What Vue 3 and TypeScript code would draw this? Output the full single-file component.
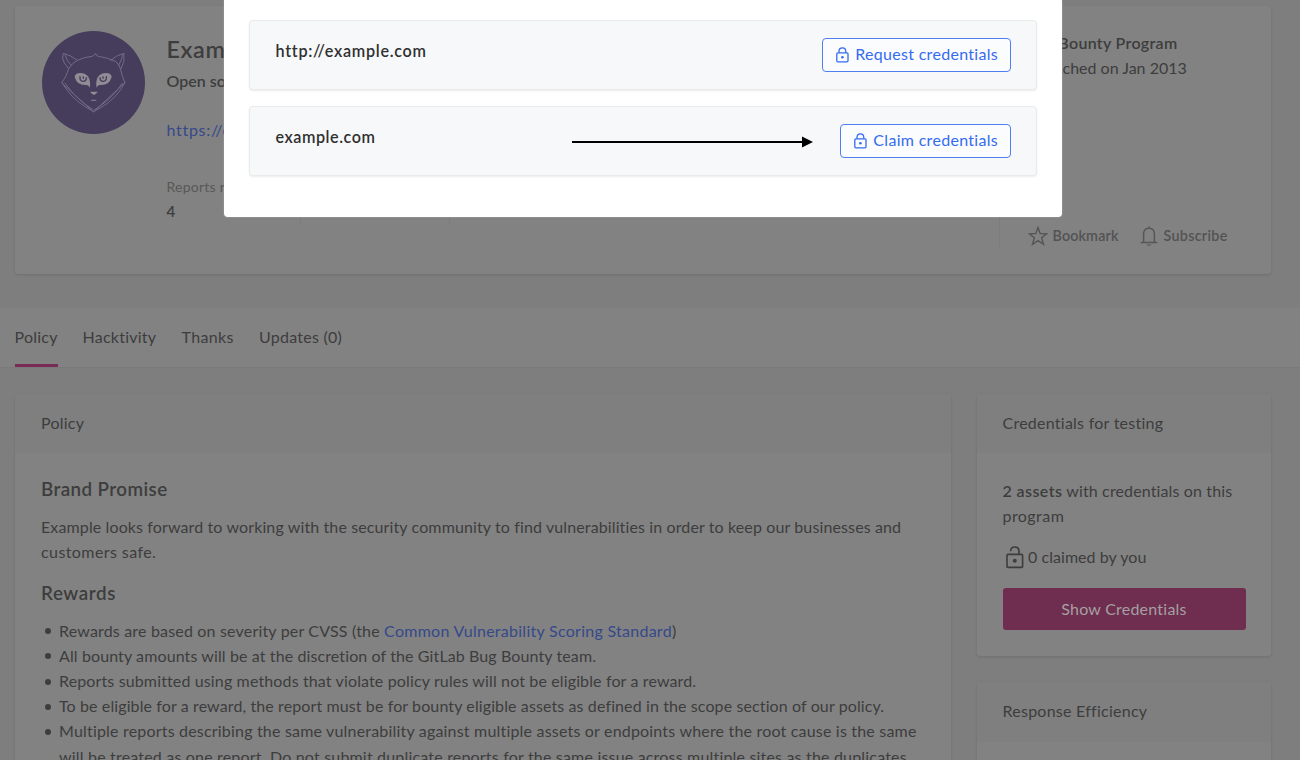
<script setup lang="ts">
interface Line {
  text: string
  link?: string
  tail?: string
  tracking: number
}

interface Asset {
  name: string
  action: string
  arrow: boolean
}

const assets: Asset[] = [
  { name: 'http://example.com', action: 'Request credentials', arrow: false },
  { name: 'example.com', action: 'Claim credentials', arrow: true },
]

const tabs = ['Policy', 'Hacktivity', 'Thanks', 'Updates (0)']

// Each rule is a list of lines; `tracking` is the letter spacing of the line in px.
const rules: Line[][] = [
  [{ text: 'Rewards are based on severity per CVSS (the ', link: 'Common Vulnerability Scoring Standard', tail: ')', tracking: 0.18 }],
  [{ text: 'All bounty amounts will be at the discretion of the GitLab Bug Bounty team.', tracking: 0.11 }],
  [{ text: 'Reports submitted using methods that violate policy rules will not be eligible for a reward.', tracking: 0.135 }],
  [{ text: 'To be eligible for a reward, the report must be for bounty eligible assets as defined in the scope section of our policy.', tracking: 0.11 }],
  [
    { text: 'Multiple reports describing the same vulnerability against multiple assets or endpoints where the root cause is the same', tracking: 0.19 },
    { text: 'will be treated as one report. Do not submit duplicate reports for the same issue across multiple sites as the duplicates', tracking: 0.185 },
  ],
]
</script>

<template>
  <div class="screen">
    <div class="page">
      <section class="card profile">
        <svg class="avatar" viewBox="0 0 309 309" fill="none">
          <circle cx="154.5" cy="154.5" r="154.5" fill="#453d5b" />
          <g stroke="#716b84" stroke-width="3" stroke-linejoin="round" stroke-linecap="round">
            <path d="M60 155 Q74 135 80 113 Q90 96 106 88 Q128 78 150 76 Q156 75 161 67 Q161 74 169 76 Q196 79 222 92 Q234 102 237 120 Q240 137 249 155 L155 242Z" />
            <path d="M60 155 L77 180 Q105 216 155 242 Q207 216 233 180 L249 155 M69 157 Q105 207 153 236 M241 157 Q207 207 158 236" />
            <path d="M80 113 L67 96 Q58 81 64 67 Q88 73 106 88 M87 102 Q71 86 69 71 M237 114 Q250 91 246 67 Q222 73 206 88 M229 104 Q241 86 242 71" />
          </g>
          <g fill="#8f8c95">
            <path d="M98 138 Q99 126 115 126 Q139 127 143 147 Q146 158 143 171 Q140 161 131 162 Q105 163 98 138Z" />
            <path d="M209 138 Q208 126 192 126 Q168 127 164 147 Q161 158 164 171 Q167 161 176 162 Q202 163 209 138Z" />
            <path d="M144 182 H167 Q164 188 156 192 Q147 188 144 182Z" />
            <path d="M147 207 Q155 204 163 207 V210 H147Z" opacity=".7" />
          </g>
          <g stroke="#453d5b" stroke-width="4" stroke-linecap="round">
            <path d="M114 137 Q113 151 123 151 Q133 151 133 140 M193 137 Q194 151 184 151 Q174 151 174 140 M124 138 V142 M183 138 V142" />
          </g>
        </svg>
        <div class="about">
          <h1>Example</h1>
          <p class="tagline">Open source</p>
          <a class="site">https://example.com</a>
          <div class="stats">
            <div class="stat first">
              <p class="stat-label">Reports resolved</p>
              <p class="stat-value">4</p>
            </div>
            <div class="stat"></div>
          </div>
        </div>
        <div class="facts">
          <p class="strong program">Bug Bounty Program</p>
          <p class="launched">Launched on Jan 2013</p>
          <div class="actions">
            <svg class="star" viewBox="0 0 20 20" fill="none" stroke="#565656" stroke-width="1.4">
              <path d="M10 1.6 L12.2 7.5 L18.7 7.8 L13.6 11.8 L15.5 18.3 L10 14.6 L4.5 18.3 L6.4 11.8 L1.3 7.8 L7.8 7.5Z" />
            </svg>
            <span class="bookmark">Bookmark</span>
            <svg class="bell" viewBox="0 0 18 22" fill="none" stroke="#565656" stroke-width="1.5">
              <path d="M1.2 17.4 H16.8 M3.6 17 V9 Q3.6 3.2 9 3.2 Q14.4 3.2 14.4 9 V17 M9 3 V2" stroke-linecap="round" />
              <path d="M6.5 19.4 H11.5 Q9 22 6.5 19.4Z" fill="#565656" stroke="none" />
            </svg>
            <span class="subscribe">Subscribe</span>
          </div>
        </div>
      </section>

      <nav class="tabs">
        <a v-for="(tab, i) in tabs" :key="tab" :class="['tab', 'tab-' + i, { active: i === 0 }]">{{ tab }}</a>
      </nav>

      <main class="columns">
        <section class="card policy">
          <header class="card-head">Policy</header>
          <div class="policy-body">
            <h2>Brand Promise</h2>
            <p class="intro">Example looks forward to working with the security community to find vulnerabilities in order to keep our businesses and</p>
            <p class="outro">customers safe.</p>
            <h2 class="second">Rewards</h2>
            <ul>
              <li v-for="(rule, r) in rules" :key="r">
                <p v-for="line in rule" :key="line.text" :style="{ letterSpacing: line.tracking + 'px' }">{{ line.text }}<a v-if="line.link" class="link">{{ line.link }}</a>{{ line.tail }}</p>
              </li>
            </ul>
          </div>
        </section>

        <aside class="side">
          <section class="card creds">
            <header class="card-head">Credentials for testing</header>
            <div class="creds-body">
              <p><b>2 assets</b> with credentials on this<br><span class="prog">program</span></p>
              <div class="claimed">
                <svg viewBox="0 0 18 23" fill="none" stroke="#3d3d3d" stroke-width="1.6">
                  <rect x="1" y="8.4" width="15.6" height="13" rx="1" />
                  <path d="M4.6 5.2 Q4.8 1 8.8 1 Q13 1 13 5.4 V8.4" />
                  <circle cx="8.8" cy="14.8" r="2" fill="#3d3d3d" stroke="none" />
                </svg>
                <span>0 claimed by you</span>
              </div>
              <button class="show">Show Credentials</button>
            </div>
          </section>
          <section class="card response">
            <header class="card-head">Response Efficiency</header>
          </section>
        </aside>
      </main>
    </div>

    <div class="modal">
      <article v-for="asset in assets" :key="asset.name" class="asset">
        <span class="asset-name" :class="{ short: asset.arrow }">{{ asset.name }}</span>
        <svg v-if="asset.arrow" class="arrow" viewBox="0 0 242 12">
          <path d="M0 6 H232" stroke="#000" stroke-width="2" />
          <path d="M230 0.4 L241 6 L230 11.6Z" fill="#000" />
        </svg>
        <button class="claim">
          <svg viewBox="0 0 13 16" fill="none" stroke="#346bf1" stroke-width="1.3">
            <rect x="0.8" y="5.8" width="11.2" height="9" rx="1" />
            <path d="M3 5.8 V4.4 Q3 0.8 6.4 0.8 Q9.8 0.8 9.8 4.4 V5.8" />
            <circle cx="6.4" cy="10.3" r="1.3" fill="#346bf1" stroke="none" />
          </svg>
          <span>{{ asset.action }}</span>
        </button>
      </article>
    </div>
  </div>
</template>

<style>
body {
  background: #fff;
  overflow: hidden;
}
</style>

<style scoped>
* {
  box-sizing: border-box;
}
.screen {
  position: relative;
  width: 1300px;
  height: 760px;
  overflow: hidden;
  background: #7e7e7e;
  color: #3d3d3d;
  font-family: Lato, "Liberation Sans", sans-serif;
  font-size: 16px;
  line-height: 25.2px;
}
p, h1, h2, ul {
  margin: 0;
  padding: 0;
  white-space: nowrap;
}
h1, h2, b, .strong {
  font-weight: 600;
}
button {
  font: inherit;
}
.page {
  padding-top: 6px;
}
.card {
  background: #828282;
  border-radius: 3px;
  box-shadow: 0 1px 3px rgba(0, 0, 0, 0.12);
}
.profile {
  display: flex;
  width: 1256px;
  height: 268px;
  margin-left: 15px;
  padding: 25px 0 0 26.5px;
}
.avatar {
  width: 103px;
  height: 103px;
  flex: none;
}
.about {
  width: 832px;
  margin-left: 22px;
}
h1 {
  margin-top: 3px;
  font-size: 23.4px;
  letter-spacing: 0.6px;
  line-height: 30px;
}
.tagline {
  margin-top: 4px;
  font-weight: 600;
  letter-spacing: 0;
}
.site {
  display: block;
  margin-top: 24px;
  color: #35498a;
  letter-spacing: 0.7px;
}
.stats {
  display: flex;
  height: 50px;
  margin-top: 33px;
}
.stat {
  width: 149px;
  border-right: 1px solid #7c7c7c;
}
.first {
  width: 134px;
}
.stat-label {
  color: #585858;
  font-size: 14px;
  letter-spacing: 0.25px;
  line-height: 24px;
}
.stat-value {
  font-size: 15px;
  font-weight: 600;
  line-height: 24px;
}
.facts {
  height: 217px;
  border-left: 1px solid #7b7b7b;
  padding-left: 29px;
}
.program {
  margin: -1px 0 0 -3px;
  line-height: 25px;
  letter-spacing: 0.3px;
}
.launched {
  letter-spacing: 0;
}
.actions {
  display: flex;
  align-items: center;
  margin: 143px 0 0 -1px;
  color: #535353;
  font-size: 14.3px;
  font-weight: 600;
  line-height: 25px;
}
.star {
  width: 20px;
  height: 20px;
  margin-right: 5px;
}
.bell {
  width: 18px;
  height: 22px;
  margin: 0 6px 0 21px;
}
.bookmark {
  width: 66px;
  letter-spacing: 0.15px;
}
.subscribe {
  letter-spacing: 0.3px;
}
.tabs {
  display: flex;
  height: 60px;
  margin-top: 34px;
  padding: 0 14.5px;
  background: #828282;
  border-bottom: 1px solid #7a7a7a;
  gap: 25px;
  line-height: 58px;
  letter-spacing: 0.25px;
}
.tab {
  height: 58.5px;
}
.tab-0 {
  width: 43px;
}
.tab-1 {
  width: 74px;
}
.tab-2 {
  width: 52.5px;
  letter-spacing: 0.33px;
}
.active {
  border-bottom: 3px solid #7a2b55;
}
.columns {
  display: flex;
  align-items: flex-start;
  gap: 26px;
  margin-top: 25.5px;
  padding-left: 15px;
}
.policy {
  width: 935.5px;
  height: 420px;
}
.card-head {
  height: 59.5px;
  padding-left: 26px;
  background: #7f7f7f;
  border-radius: 3px 3px 0 0;
  line-height: 58.5px;
  letter-spacing: 0.25px;
}
.policy-body {
  padding: 22.5px 0 0 26px;
}
h2 {
  font-size: 18.8px;
  letter-spacing: 0.42px;
  line-height: 25px;
}
.intro {
  margin-top: 13px;
  letter-spacing: 0.12px;
}
.outro {
  letter-spacing: 0.42px;
}
.second {
  margin-top: 15.8px;
  letter-spacing: 0.6px;
}
ul {
  margin-top: 12.9px;
  padding-left: 18px;
  list-style: none;
}
li {
  position: relative;
}
li::before {
  content: "";
  position: absolute;
  left: -14px;
  top: 10.5px;
  width: 6px;
  height: 6px;
  border-radius: 50%;
  background: #3d3d3d;
}
.link {
  color: #35498a;
  letter-spacing: 0.27px;
}
.side {
  width: 294px;
}
.creds {
  height: 262.5px;
}
.creds-body {
  padding: 24.5px 26px 0;
  letter-spacing: 0.13px;
}
.creds-body b {
  letter-spacing: 0.42px;
}
.prog {
  letter-spacing: 0.45px;
}
.claimed {
  display: flex;
  align-items: center;
  height: 30px;
  margin-top: 13.5px;
  padding-left: 3.5px;
  letter-spacing: 0.05px;
}
.claimed svg {
  width: 18px;
  height: 23px;
  margin: 2px 4px 0 0;
}
.show {
  display: block;
  width: 243px;
  height: 42px;
  margin-top: 17px;
  padding: 0 0 2px;
  border: 0;
  border-radius: 3px;
  background: #6f2d4f;
  color: #a5a0a2;
  letter-spacing: 0.23px;
}
.response {
  height: 120px;
  margin-top: 26px;
}
.modal {
  position: absolute;
  left: 224px;
  top: 0;
  width: 838px;
  height: 217px;
  padding: 20px 25px 0;
  border-radius: 0 0 4px 4px;
  background: #fff;
  box-shadow: 0 0 2px rgba(255, 255, 255, 0.35);
}
.asset {
  display: flex;
  align-items: center;
  height: 70px;
  margin-bottom: 16px;
  padding: 0 25px 0 25.5px;
  border: 1px solid #e9ebeb;
  border-radius: 4px;
  background: #f7f8fa;
  box-shadow: 0 1px 2px rgba(0, 0, 0, 0.08);
}
.asset-name {
  margin-top: -8px;
  color: #303030;
  font-size: 16.2px;
  font-weight: 600;
  letter-spacing: 0.7px;
}
.short {
  width: 296px;
  letter-spacing: 0.53px;
}
.arrow {
  width: 242px;
  height: 12px;
  margin-top: 1px;
}
.claim {
  display: flex;
  align-items: center;
  height: 34px;
  margin-left: auto;
  padding: 0 12px 2px 13px;
  border: 1px solid #4f7ff2;
  border-radius: 4px;
  background: #fbfcfe;
  color: #346bf1;
  letter-spacing: 0.3px;
}
.claim svg {
  width: 13px;
  height: 16px;
  margin: 1px 6.5px 0 0;
}
</style>
